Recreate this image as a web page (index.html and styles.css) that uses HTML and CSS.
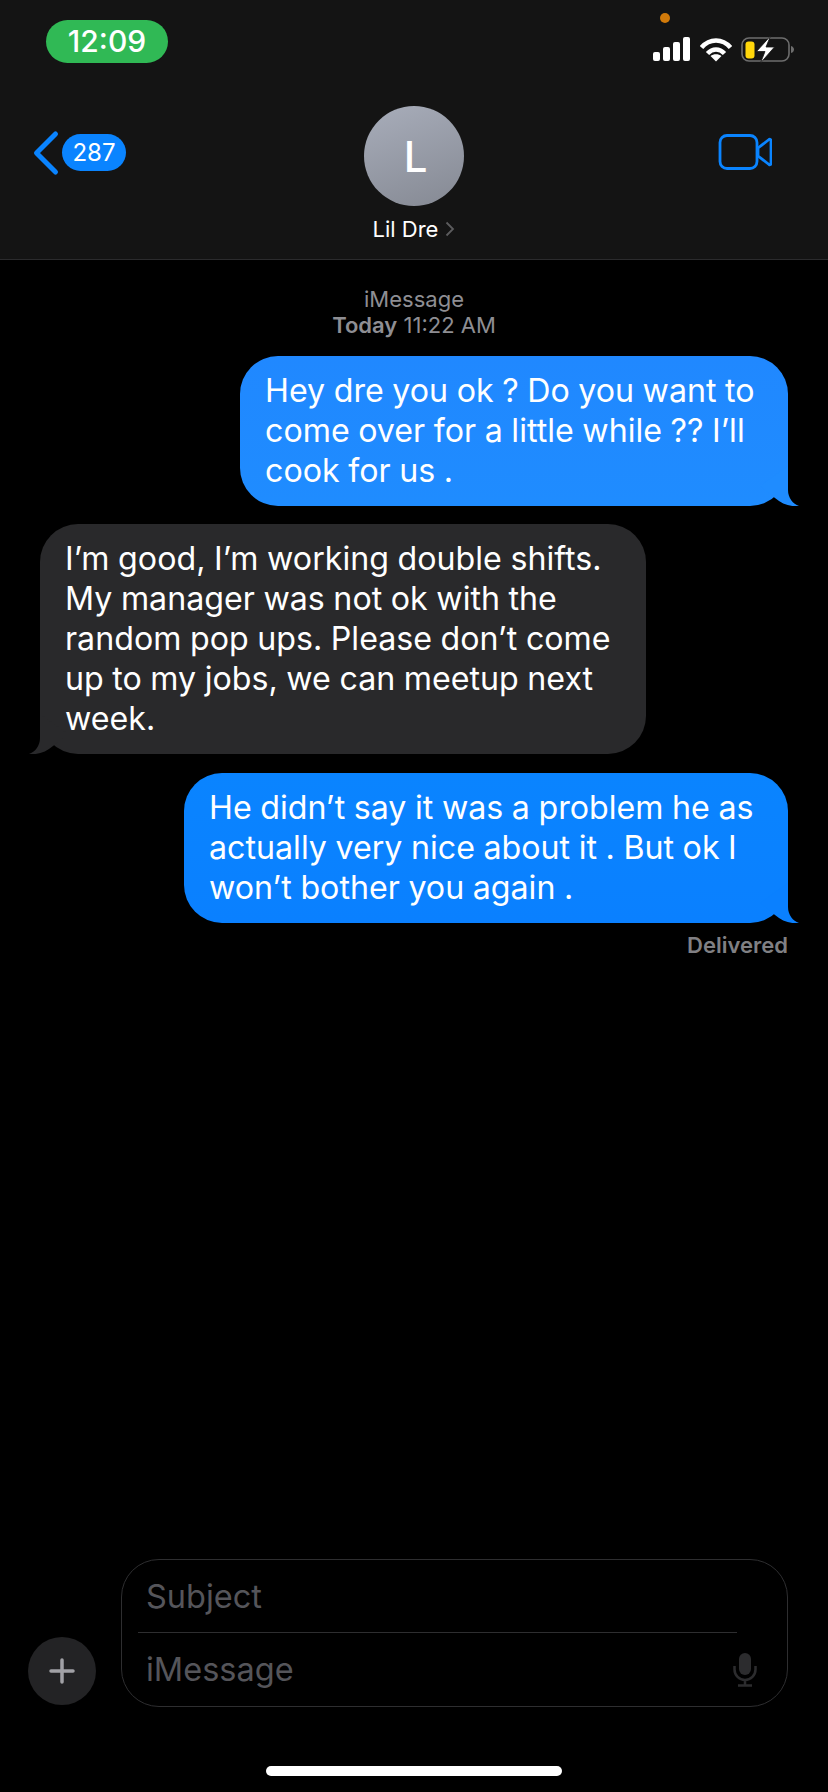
FILE: index.html
```html
<!DOCTYPE html>
<html lang="en">
<head>
    <meta charset="UTF-8">
    <meta name="viewport" content="width=device-width, initial-scale=1.0">
    <title>Lil Dre</title>
    <link rel="stylesheet" href="styles.css">
</head>
<body>
    <div class="phone">
        <header class="top">
            <div class="status-bar">
                <div class="clock">12:09</div>
                <div class="status-icons">
                    <span class="mic-dot"></span>
                    <svg width="37" height="24" viewBox="0 0 37 24" fill="#fff">
                        <rect x="0" y="15" width="7" height="9" rx="2"/>
                        <rect x="10" y="10" width="7" height="14" rx="2"/>
                        <rect x="20" y="5" width="7" height="19" rx="2"/>
                        <rect x="30" y="0" width="7" height="24" rx="2"/>
                    </svg>
                    <svg width="32" height="25" viewBox="0 0 32 25" fill="none" stroke="#fff" stroke-width="4.500">
                        <path d="M1.500 10.500C9.500 1 22.500 1 30.500 10.500"/>
                        <path d="M7.500 16.500c5-5.500 12-5.500 17 0"/>
                        <path d="M16 24.500l-5.500-5.500c3-2.500 8-2.500 11 0z" fill="#fff" stroke="none"/>
                    </svg>
                    <svg class="battery" width="54" height="28" viewBox="0 0 54 28" fill="none">
                        <rect x="2" y="3" width="47" height="23" rx="7" stroke="#6d6d6d" stroke-width="1.600"/>
                        <rect x="5.500" y="6.500" width="9" height="17" rx="3" fill="#ffd60a"/>
                        <path d="M51 11v7c2-.5 3-2 3-3.500s-1-3-3-3.500z" fill="#6d6d6d"/>
                        <path d="M30.500 1L16.500 16.500H25L20.500 28 34.500 12H26z" fill="#fff" stroke="#141414" stroke-width=".8"/>
                    </svg>
                </div>
            </div>
            <nav class="nav">
                <div class="back">
                    <svg width="28" height="46" viewBox="0 0 28 46" fill="none" stroke="#0a84ff" stroke-width="5" stroke-linecap="round" stroke-linejoin="round">
                        <path d="M23.500 4L4.500 23l19 19"/>
                    </svg>
                    <span class="badge">287</span>
                </div>
                <div class="contact">
                    <div class="avatar">L</div>
                    <div class="contact-name">Lil Dre
                        <svg width="10" height="16" viewBox="0 0 10 16" fill="none" stroke="#5c5c5e" stroke-width="1.800"><path d="M1.500 1.500L8 8l-6.500 6.500"/></svg>
                    </div>
                </div>
                <svg class="video" width="54" height="36" viewBox="0 0 54 36" fill="none" stroke="#0a84ff" stroke-width="2.800" stroke-linejoin="round">
                    <rect x="2" y="1.500" width="37" height="33" rx="7"/>
                    <path d="M40 14l11-8.500c1-.700 2 0 2 1v23c0 1-1 1.700-2 1l-11-8.500z"/>
                </svg>
            </nav>
        </header>

        <main class="thread">
            <div class="thread-head">
                <div>iMessage</div>
                <div><b>Today</b> 11:22 AM</div>
            </div>
            <div class="bubble sent first">Hey dre you ok ? Do you want to come over for a little while ?? I’ll cook for us .
                <svg class="tail" width="50" height="40" viewBox="0 0 50 40"><path d="M38 0v24c0 8 5 14 11 16-9 1-17-2-24-8L10 20z"/></svg>
            </div>
            <div class="bubble received">I’m good, I’m working double shifts. My manager was not ok with the random pop ups. Please don’t come up to my jobs, we can meetup next week.
                <svg class="tail" width="50" height="40" viewBox="0 0 50 40"><path d="M38 0v24c0 8 5 14 11 16-9 1-17-2-24-8L10 20z"/></svg>
            </div>
            <div class="bubble sent narrow">He didn’t say it was a problem he as actually very nice about it . But ok I won’t bother you again .
                <svg class="tail" width="50" height="40" viewBox="0 0 50 40"><path d="M38 0v24c0 8 5 14 11 16-9 1-17-2-24-8L10 20z"/></svg>
            </div>
            <div class="delivered">Delivered</div>
        </main>

        <footer class="composer">
            <div class="plus">
                <svg width="28" height="28" viewBox="0 0 28 28" stroke="#a1a1a6" stroke-width="3.500" stroke-linecap="round">
                    <path d="M14 3v22M3 14h22"/>
                </svg>
            </div>
            <div class="field">
                <div class="field-row subject">Subject</div>
                <div class="field-row message">iMessage
                    <svg width="24" height="34" viewBox="0 0 24 34" fill="none" stroke="#2c2c2e" stroke-width="2.500">
                        <rect x="6" y="0" width="12" height="22" rx="6" fill="#2c2c2e" stroke="none"/>
                        <path d="M1.500 13v3.500a10.500 10.500 0 0 0 21 0V13M12 27v5M5 32.500h14"/>
                    </svg>
                </div>
            </div>
        </footer>
        <div class="home-bar"></div>
    </div>
</body>
</html>
```

FILE: styles.css
```css
* {
    box-sizing: border-box;
}
body {
    margin: 0;
    background: #000;
    color: #fff;
    font-family: Inter, "Liberation Sans", Arial, sans-serif;
}
.phone {
    width: 828px;
    height: 1792px;
    display: flex;
    flex-direction: column;
    overflow: hidden;
}

/* top bar */
.top {
    height: 260px;
    background: #141414;
    border-bottom: 1px solid #2b2b2d;
}
.status-bar {
    display: flex;
    justify-content: space-between;
    padding: 20px 34px 0 46px;
    height: 106px;
}
.clock {
    width: 122px;
    height: 43px;
    border-radius: 22px;
    background: #30b955;
    font-size: 30px;
    font-weight: 500;
    line-height: 43px;
    text-align: center;
}
.status-icons {
    position: relative;
    display: flex;
    align-items: flex-start;
    gap: 10px;
    padding-top: 17px;
}
.mic-dot {
    position: absolute;
    left: 7px;
    top: -7px;
    width: 10px;
    height: 10px;
    border-radius: 50%;
    background: #d17a0a;
}
.battery {
    margin-top: -2px;
    margin-left: -2px;
}
.nav {
    position: relative;
    display: flex;
    justify-content: space-between;
    padding: 0 56px 0 32px;
}
.back {
    display: flex;
    align-items: center;
    gap: 2px;
    height: 46px;
    margin-top: 24px;
}
.badge {
    width: 64px;
    height: 37px;
    margin-top: -2px;
    border-radius: 19px;
    background: #0a84ff;
    font-size: 24px;
    line-height: 37px;
    text-align: center;
}
.contact {
    position: absolute;
    left: 0;
    right: 0;
    top: 0;
    display: flex;
    flex-direction: column;
    align-items: center;
}
.avatar {
    width: 100px;
    height: 100px;
    padding-left: 3px;
    border-radius: 50%;
    background: linear-gradient(160deg, #a8adba, #858993);
    font-size: 42px;
    font-weight: 500;
    line-height: 102px;
    text-align: center;
}
.contact-name {
    display: flex;
    align-items: center;
    gap: 7px;
    margin-top: 10px;
    font-size: 22px;
    line-height: 26px;
}
.video {
    margin-top: 28px;
}

/* messages */
.thread {
    flex: 1;
    display: flex;
    flex-direction: column;
    padding: 26px 40px 0;
    font-size: 32.200px;
    line-height: 40px;
    word-spacing: -0.500px;
}
.thread-head {
    text-align: center;
    font-size: 22px;
    line-height: 26px;
    word-spacing: 0;
    color: #8e8e93;
}
.thread-head b {
    font-weight: 600;
}
.bubble {
    position: relative;
    border-radius: 38px;
    padding: 15px 24px 15px 25px;
}
.tail {
    position: absolute;
    right: -12px;
    bottom: 0;
}
.sent {
    align-self: flex-end;
    background: #0a84ff;
}
.first {
    width: 548px;
    margin-top: 18px;
    background: linear-gradient(#2088ff, #1f8cff);
}
.first .tail {
    fill: #1f8cff;
}
.narrow {
    width: 604px;
    margin-top: 19px;
    background: linear-gradient(#0a84ff, #0a80ff);
}
.narrow .tail {
    fill: #0a80ff;
}
.received {
    align-self: flex-start;
    width: 606px;
    margin-top: 18px;
    background: #29292b;
    padding-right: 20px;
}
.received .tail {
    right: auto;
    left: -12px;
    fill: #29292b;
    transform: scaleX(-1);
}
.delivered {
    align-self: flex-end;
    margin-top: 9px;
    font-size: 22px;
    font-weight: 600;
    line-height: 26px;
    word-spacing: 0;
    color: #808084;
}

/* composer */
.composer {
    display: flex;
    align-items: flex-end;
    gap: 25px;
    padding: 0 40px 0 28px;
}
.plus {
    flex: none;
    display: flex;
    align-items: center;
    justify-content: center;
    width: 68px;
    height: 68px;
    margin-bottom: 2px;
    border-radius: 50%;
    background: #232325;
}
.field {
    flex: 1;
    height: 148px;
    border: 1.500px solid #2e2e30;
    border-radius: 38px;
    font-size: 32.500px;
    color: #55555a;
}
.field-row {
    display: flex;
    justify-content: space-between;
    align-items: center;
    margin-left: 16px;
    padding-left: 8px;
}
.subject {
    height: 73px;
    margin-right: 50px;
    border-bottom: 1px solid #2e2e30;
}
.message {
    height: 73px;
    padding-right: 30px;
}
.home-bar {
    width: 296px;
    height: 10px;
    margin: 59px auto 16px;
    border-radius: 5px;
    background: #fff;
}
```
